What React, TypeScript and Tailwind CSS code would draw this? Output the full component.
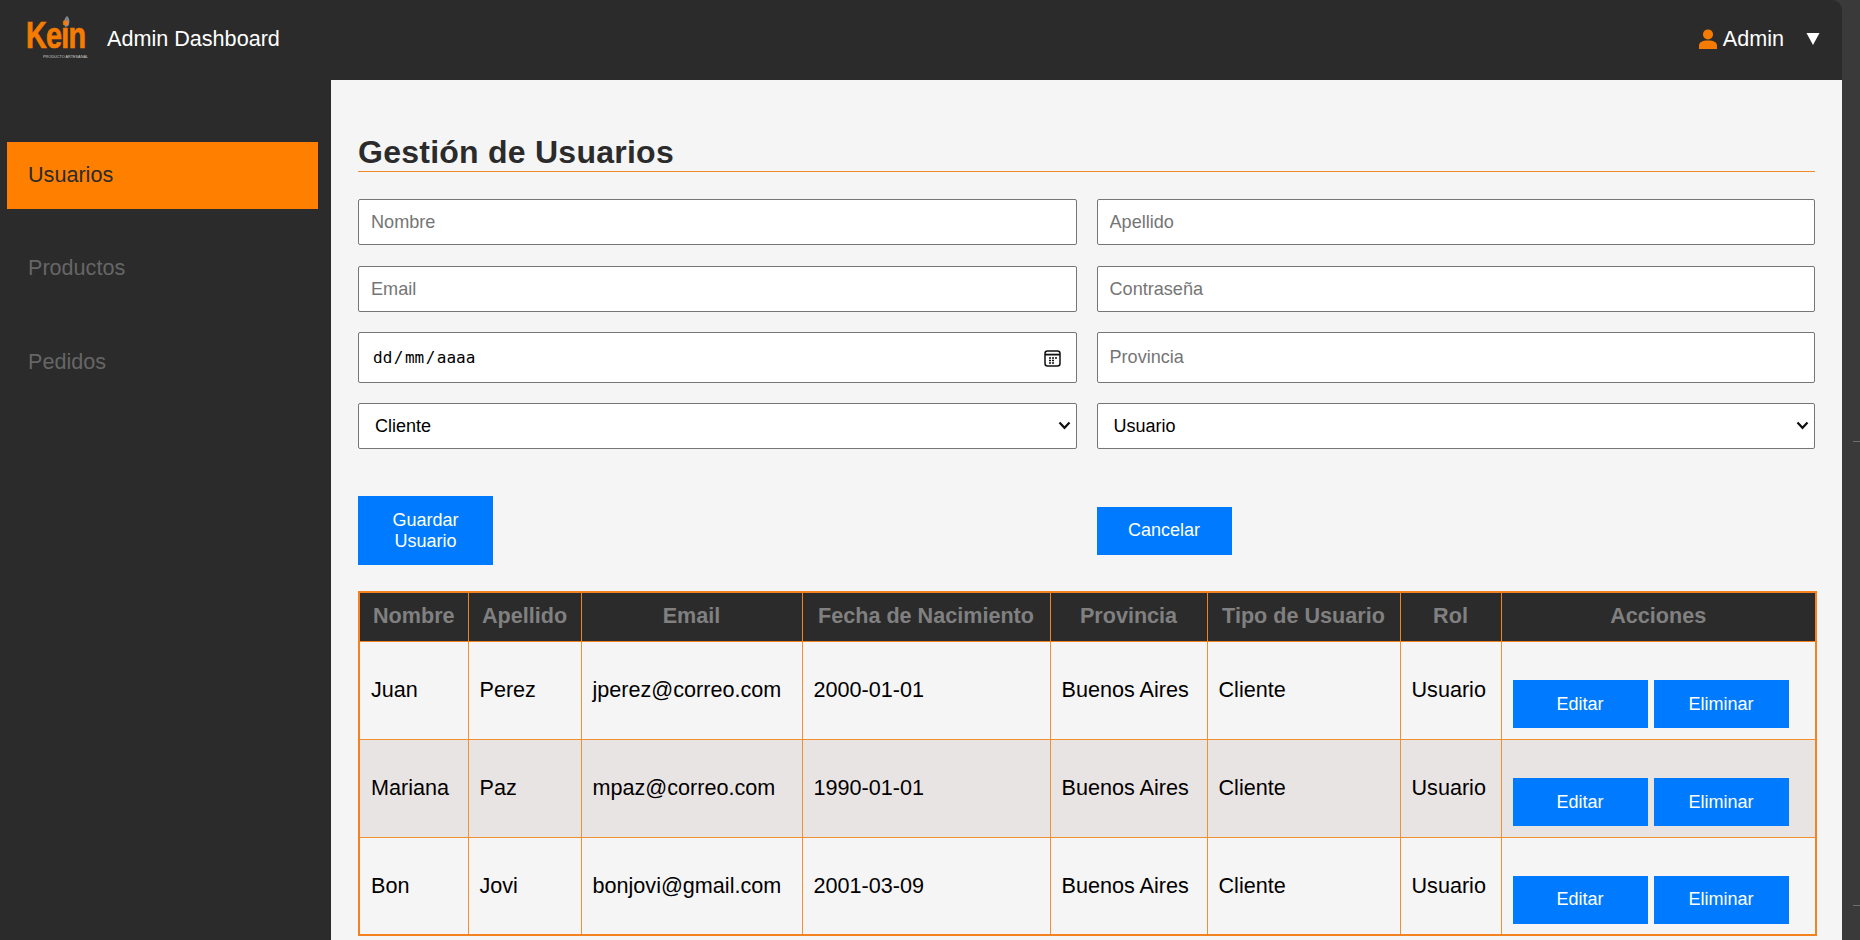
const F = "font-['Liberation_Sans',Arial,sans-serif]";

function Input({ placeholder, h, className = "" }: { placeholder: string; h: string; className?: string }) {
  return (
    <input
      placeholder={placeholder}
      className={`${h} ${className} w-full rounded-[2px] border border-[#767676] bg-white px-[12px] text-[18.1px] text-black placeholder:text-[#757575] outline-none`}
    />
  );
}

function Select({ value }: { value: string }) {
  return (
    <div className="relative h-[46px]">
      <select
        defaultValue={value}
        className="h-full w-full appearance-none rounded-[2px] border border-[#767676] bg-white pl-[16px] text-[18px] text-black outline-none"
      >
        <option>{value}</option>
      </select>
      <svg className="pointer-events-none absolute right-[6px] top-[18px]" width="13" height="9" viewBox="0 0 13 9" fill="none">
        <path d="M1.5 1.5L6.5 6.8L11.5 1.5" stroke="#111" strokeWidth="2.2" />
      </svg>
    </div>
  );
}

function Btn({ children, className = "" }: { children: React.ReactNode; className?: string }) {
  return (
    <button className={`w-[135px] bg-[#007bff] text-[18px] leading-[21px] text-white ${className}`}>
      {children}
    </button>
  );
}

const rows = [
  ["Juan", "Perez", "jperez@correo.com", "2000-01-01"],
  ["Mariana", "Paz", "mpaz@correo.com", "1990-01-01"],
  ["Bon", "Jovi", "bonjovi@gmail.com", "2001-03-09"],
];
const heads = ["Nombre", "Apellido", "Email", "Fecha de Nacimiento", "Provincia", "Tipo de Usuario", "Rol", "Acciones"];
const widths = ["w-[109px]", "w-[113px]", "w-[221px]", "w-[248px]", "w-[157px]", "w-[193px]", "w-[101px]", "w-[315px]"];

export default function App() {
  return (
    <div className={`${F} flex h-[940px] w-[1860px] overflow-hidden bg-[#3a3a3a]`}>
      <div className="flex h-full w-[1842px] flex-col overflow-hidden rounded-tr-[10px] bg-[#2b2b2b]">
        <header className="flex h-[80px] shrink-0 items-center justify-between pb-[2px] pl-[26px] pr-[22px]">
          <div className="flex items-center gap-[21px]">
            <div className="relative flex h-[44px] w-[60px] flex-col items-start">
              <svg className="absolute left-[37px] top-[-1px]" width="7" height="11" viewBox="0 0 7 11">
                <path d="M4 0.5C6 2.5 6.5 6 5 9.5L2.5 10.5C0.5 8 1.5 3 4 0.5Z" fill="#7d7d7d" stroke="#a5a5a5" strokeWidth="0.8" />
              </svg>
              <span className="mt-[1px] origin-left scale-x-[0.8] whitespace-nowrap text-[36px] font-bold leading-[36px] tracking-[-1px] text-[#f57c00] [-webkit-text-stroke:0.7px_#f57c00]">Kein</span>
              <span className="ml-[17px] origin-left scale-x-[0.95] whitespace-nowrap text-[4px] leading-[5px] text-[#cfcfcf]">PRODUCTO ARTESANAL</span>
            </div>
            <span className="text-[21.6px] text-white">Admin Dashboard</span>
          </div>
          <div className="flex items-center text-[21.6px] text-white">
            <svg width="18" height="20" viewBox="0 0 18 20" className="mr-[6px]">
              <circle cx="9" cy="5.4" r="5" fill="#f57c00" />
              <path d="M0 20V16.5C0 13.5 3 11.5 9 11.5S18 13.5 18 16.5V20Z" fill="#f57c00" />
            </svg>
            <span>Admin</span>
            <svg width="14" height="14" viewBox="0 0 14 14" className="ml-[22px]">
              <path d="M0.5 1H13.5L7 13Z" fill="#fff" />
            </svg>
          </div>
        </header>
        <div className="flex min-h-0 flex-1">
          <aside className="w-[331px] shrink-0 pl-[7px] pr-[13px] pt-[62px] text-[21.6px]">
            <div className="flex h-[67px] items-center bg-[#ff8000] pl-[21px] text-[#2b2b2b]">Usuarios</div>
            <div className="mt-[26px] flex h-[67px] items-center pl-[21px] text-[#666666]">Productos</div>
            <div className="mt-[27px] flex h-[67px] items-center pl-[21px] text-[#666666]">Pedidos</div>
          </aside>
          <main className="min-w-0 flex-1 bg-[#f5f5f5] pl-[27px] pr-[27px] pt-[52px]">
            <h2 className="h-[40px] border-b border-[#f08a24] text-[32px] font-bold leading-[40px] tracking-[0.25px] text-[#2b2b2b]">
              Gestión de Usuarios
            </h2>
            <div className="mt-[27px] grid grid-cols-2 gap-x-[20px] gap-y-[20px]">
              <Input placeholder="Nombre" h="h-[46px]" className="mb-px" />
              <Input placeholder="Apellido" h="h-[46px]" className="mb-px" />
              <Input placeholder="Email" h="h-[46px]" />
              <Input placeholder="Contraseña" h="h-[46px]" />
              <div className="relative h-[51px]">
                <div className="flex h-full items-center rounded-[2px] border border-[#767676] bg-white pl-[14px] pt-[1px] font-['DejaVu_Sans_Mono',monospace] text-[16px] text-black">
                  <span>dd</span><span className="mx-[1.5px]">/</span><span>mm</span><span className="mx-[1.5px]">/</span><span>aaaa</span>
                </div>
                <svg className="absolute right-[16px] top-[18px]" width="17" height="17" viewBox="0 0 17 17" fill="none">
                  <rect x="1" y="1" width="15" height="15" rx="2.5" stroke="#111" strokeWidth="1.5" />
                  <path d="M1 4.6H16" stroke="#111" strokeWidth="1.8" />
                  <path d="M5 8h2M8 8h2M11 8h2M5 10.5h2M8 10.5h2M5 13h2M8 13h2" stroke="#111" strokeWidth="1.4" />
                </svg>
              </div>
              <Input placeholder="Provincia" h="h-[51px]" />
              <Select value="Cliente" />
              <Select value="Usuario" />
              <div className="mt-[27px] flex h-[69px] items-center">
                <Btn className="h-[69px]">Guardar<br />Usuario</Btn>
              </div>
              <div className="mt-[27px] flex h-[69px] items-center">
                <Btn className="h-[48px]">Cancelar</Btn>
              </div>
            </div>
            <table className="mt-[26px] w-[1457px] table-fixed border-collapse border-2 border-[#f58220] text-[21.6px] text-black">
              <thead>
                <tr className="h-[49px] bg-[#2b2b2b]">
                  {heads.map((h, i) => (
                    <th key={h} className={`${widths[i]} border border-[#f58220] pb-[2px] text-center font-bold text-[#808080]`}>{h}</th>
                  ))}
                </tr>
              </thead>
              <tbody>
                {rows.map((r, i) => (
                  <tr key={r[0]} className={`h-[98px] ${i === 1 ? "bg-[#e9e4e4]" : ""}`}>
                    {[...r, "Buenos Aires", "Cliente", "Usuario"].map((c, j) => (
                      <td key={j} className="border border-[#f0902f] pl-[11px]">{c}</td>
                    ))}
                    <td className="border border-[#f0902f] pl-[11px] pt-[28px]">
                      <div className="flex gap-[6px]">
                        <Btn className="h-[48px]">Editar</Btn>
                        <Btn className="h-[48px]">Eliminar</Btn>
                      </div>
                    </td>
                  </tr>
                ))}
              </tbody>
            </table>
          </main>
        </div>
      </div>
      <div className="relative flex-1">
        <div className="absolute left-[11px] right-0 top-[441px] h-px bg-[#6e6e6e]" />
        <div className="absolute left-[11px] right-0 top-[905px] h-px bg-[#6e6e6e]" />
      </div>
    </div>
  );
}
